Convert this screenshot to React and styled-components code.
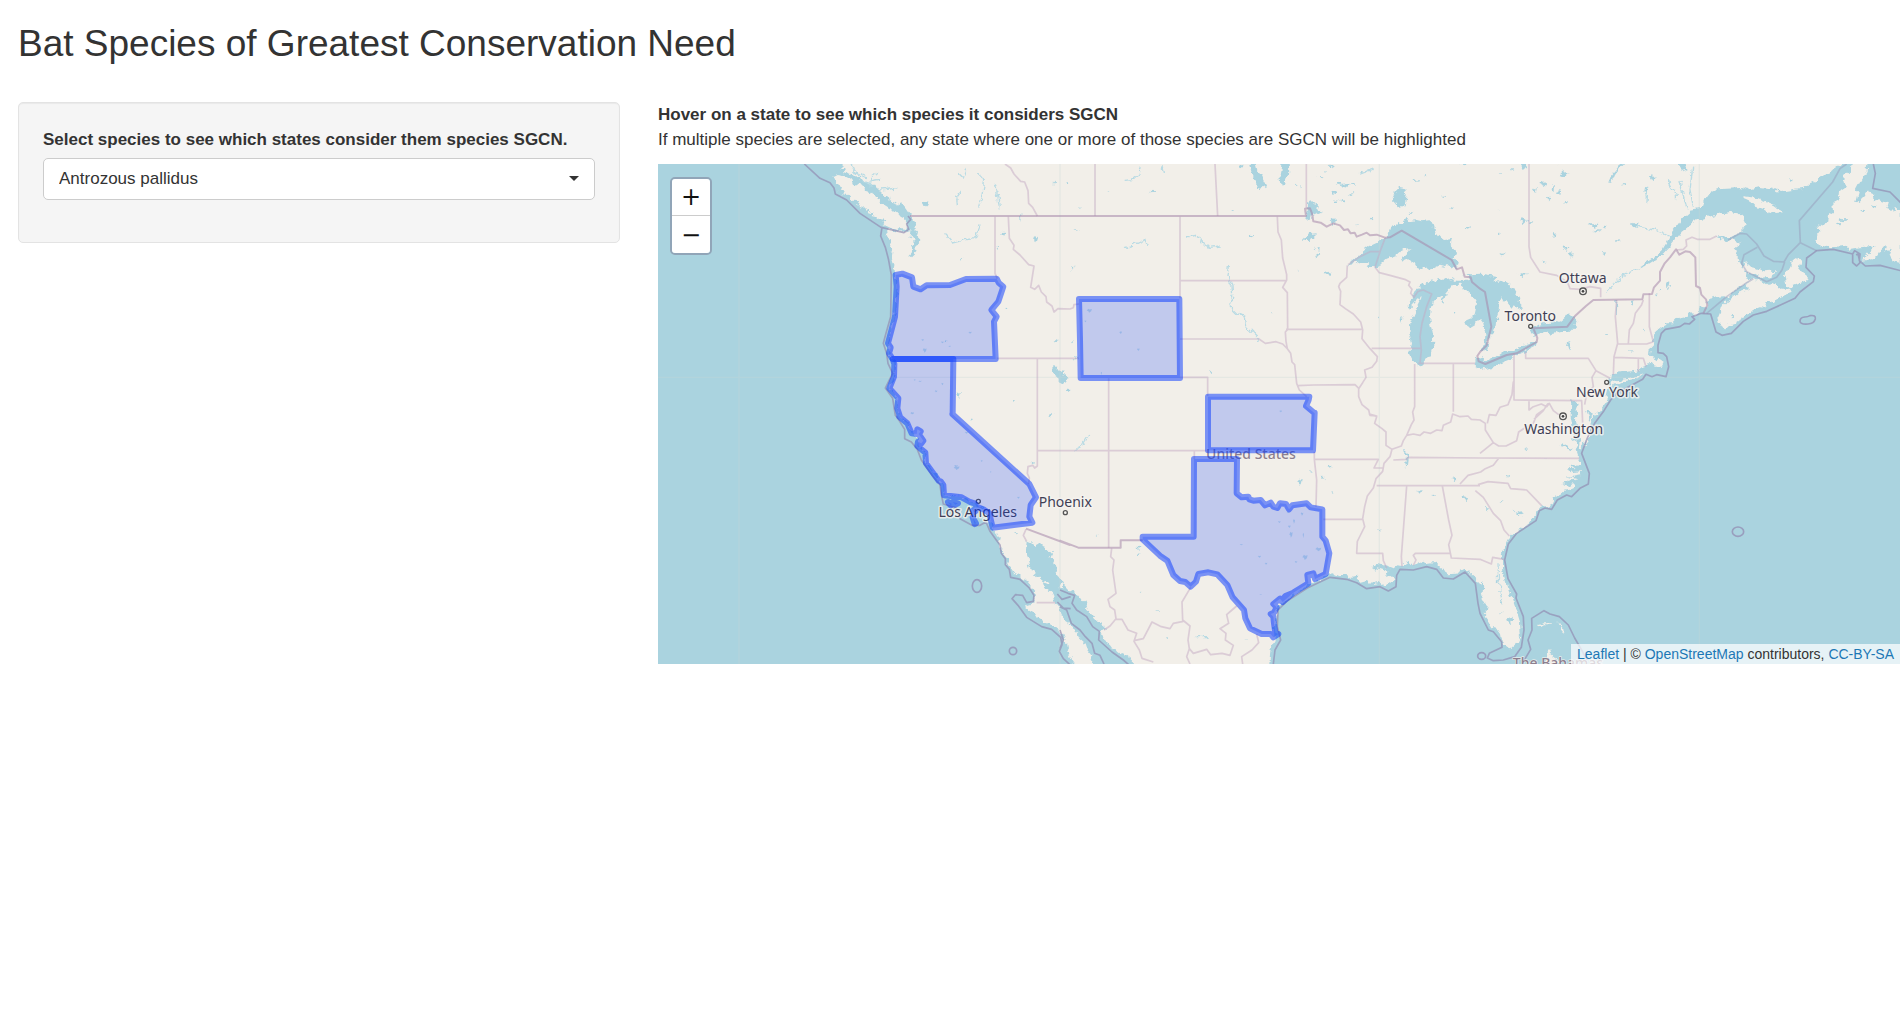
import React, { useState } from "react";
import styled, { createGlobalStyle } from "styled-components";

const GlobalStyle = createGlobalStyle`
  *, *::before, *::after { box-sizing: border-box; }
  body {
    margin: 0;
    background: #fff;
    color: #333;
    font-family: "Liberation Sans", Arial, sans-serif;
    font-size: 17px;
    line-height: 25px;
  }
`;

const Page = styled.main`
  padding: 0 4px 0 18px;
`;

const Title = styled.h1`
  margin: 0;
  padding: 24px 0 38px;
  font-size: 37px;
  font-weight: 400;
  line-height: 40px;
`;

const Columns = styled.div`
  display: grid;
  grid-template-columns: minmax(0, 602fr) minmax(0, 1242fr);
  gap: 38px;
  align-items: start;
`;

const Panel = styled.form`
  padding: 24px 24px 42px;
  background: #f5f5f5;
  border: 1px solid #e3e3e3;
  border-radius: 5px;
  box-shadow: inset 0 1px 1px rgba(0, 0, 0, 0.05);
`;

const Label = styled.label`
  display: block;
  margin-bottom: 6px;
  font-weight: 700;
`;

const SelectBox = styled.div`
  position: relative;
  &::after {
    content: "";
    position: absolute;
    right: 16px;
    top: 18px;
    border: 5px solid transparent;
    border-top-color: #333;
    border-bottom: 0;
    pointer-events: none;
  }
`;

const Select = styled.select`
  display: block;
  appearance: none;
  width: 100%;
  height: 42px;
  padding: 0 32px 2px 15px;
  background: #fff;
  border: 1px solid #ccc;
  border-radius: 5px;
  color: #333;
  font: inherit;
`;

const Intro = styled.p`
  margin: 0 0 12px;
`;

const MapFrame = styled.section`
  position: relative;
  height: 500px;
  overflow: hidden;
  background: #aad3df;
`;

const MapDrawing = styled.svg`
  display: block;
  width: 100%;
  height: 100%;
`;

const ZoomBar = styled.div`
  position: absolute;
  left: 12px;
  top: 13px;
  display: flex;
  flex-direction: column;
  border: 2px solid rgba(120, 120, 145, 0.5);
  border-radius: 5px;
  background-clip: padding-box;
`;

const ZoomButton = styled.button`
  width: 38px;
  height: 37px;
  padding: 0;
  border: 0;
  border-bottom: ${(p) => (p.$first ? "1px solid #ccc" : "0")};
  border-radius: ${(p) => (p.$first ? "3px 3px 0 0" : "0 0 3px 3px")};
  background: #fff;
  color: #111;
  font: 24px/36px "DejaVu Sans", sans-serif;
  cursor: pointer;
`;

const Attribution = styled.div`
  position: absolute;
  right: 0;
  bottom: 0;
  padding: 0 6px;
  background: rgba(255, 255, 255, 0.7);
  font-size: 14px;
  line-height: 20px;
`;

const Link = styled.a`
  color: #1d78b5;
  text-decoration: none;
`;

/* Map sheets: each has its own origin on the full drawing. */
const SHEETS = {
  nw: [-24, -12],
  n: [1206, -12],
  ne: [2466, -12],
  sw: [-24, 738],
  s: [1206, 738],
  se: [2466, 738],
};

const trace = (parts, closed) =>
  "M" +
  parts
    .map(([sheet, pts]) => {
      const [ox, oy] = SHEETS[sheet];
      return pts
        .split(" ")
        .map((pt) => {
          const [x, y] = pt.split(",").map(Number);
          return `${x + ox} ${y + oy}`;
        })
        .join("L");
    })
    .join("L") +
  (closed ? "Z" : "");

const LAND = [
  [
    ["nw", "575,12 574,22 588,26 582,36 600,42 612,38 618,52 632,50 640,64 655,60 662,74 676,74 684,88 700,98 706,112 720,108 722,122 738,126 744,138 756,132 768,148 776,160 790,176 796,190 790,206 804,214 800,228 808,236 806,256 796,262 800,278 786,292 778,286 790,272 784,258 792,244 782,230 784,210 772,214 758,218 740,214 708,202 710,226 722,250 720,262 730,278 728,296 736,310 734,330 738,345 740,400 733,470 722,520 716,550 720,590 732,612 730,650 719,684 742,715 744,760"],
    ["sw", "748,12 772,40 786,68 804,84 806,108 826,128 830,160 866,205 882,225 884,254 935,262 978,280 1006,304 1022,324 1030,356 1040,366 1046,382 1042,396 1056,412 1060,432 1074,444 1072,464 1086,474 1092,492 1110,500 1130,514 1142,530 1156,546 1160,566 1152,580 1136,584 1124,590 1140,604 1156,612 1166,628 1184,638 1204,644 1222,660 1240,668 1246,690 1252,720 1262,744"],
    ["s", "44,762 60,790 120,790 104,762 92,750 94,736 78,716 72,696 56,682 50,664 34,650 28,636 10,624"],
    ["sw", "1230,602 1222,582 1212,570 1208,552 1194,538 1182,528 1176,510 1160,498 1146,482 1140,464 1136,440 1128,420 1130,394 1144,400 1152,408 1168,400 1180,412 1196,418 1206,428 1202,444 1212,464 1216,486 1228,500 1240,520"],
    ["s", "16,526 30,540 48,548 62,566 78,576 84,592 80,606 100,616 112,632 130,640 134,656 122,668 128,686 146,700 156,714 176,728 196,736 212,748 226,762 240,790 620,790 628,762 632,712 644,690 642,650 650,600 690,562 742,530 770,508 800,496 820,490 842,500 860,492 876,504 890,500 902,516 924,510 936,522 960,518 976,530 990,518 1004,508 992,498 978,500 982,486 968,480 936,472 950,462 970,466 990,478 1010,466 1030,468 1046,456 1056,466 1090,452 1104,462 1128,458 1146,476 1166,490 1192,488 1214,476 1232,490 1252,510 1262,530"],
    ["se", "4,560 6,574 20,584 18,600 8,612 20,628 34,652 46,652 60,672 64,694 76,706 96,712 110,700 122,674 120,636 108,596 96,560 86,540 76,510 66,480 66,444 72,420 82,396 94,372 120,360 148,340 160,320 170,306 182,290 204,288 218,280 226,262 252,242 274,238 282,222 262,228 250,222 272,212 292,208 256,198 280,200 304,196 306,184 276,186 264,178 284,176 268,166 304,172 300,150 294,132 304,112 322,92 326,70 332,40 344,10"],
    ["ne", "330,780 318,748 324,744 336,766 348,772 362,748 376,730 384,706 388,684 384,664 392,654 412,648 452,638 488,632 500,622 506,606 516,610 524,620 542,620 548,608 536,600 528,604 522,590 510,584 512,566 522,556 518,544 526,530 524,514 544,498 560,490 580,490 592,478 600,470 616,474 630,460 646,462 662,448 676,440 680,424 690,416 716,410 744,408 756,394 780,384 800,366 818,356 796,370 800,388 776,396 756,414 738,426 722,446 712,470 718,492 730,510 744,498 762,492 778,482 786,468 806,462 830,446 846,440 866,428 890,420 914,406 936,398 930,386 902,386 884,372 860,374 842,362 826,360 808,350 792,344 794,330 784,322 776,310 782,300 768,288 774,276 764,264 776,254 784,244 768,248 756,240 740,246 730,236 706,232 724,228 752,232 764,226 782,222 790,206 800,190 792,174 776,160 752,156 720,160 694,168 664,178 640,188 620,204 604,216 588,236 570,258 548,282 528,298 500,316 470,328 500,306 524,290 548,268 562,244 574,220 596,190 612,168 630,152 662,146 672,120 688,98 712,88 740,86 780,84 800,90 840,80 880,86 900,96 940,90 974,86 990,70 1012,60 1030,44 1050,36 1070,20 1086,12 1086,-30"],
    ["nw", "575,-30"],
  ],
  [["nw", "550,50 566,42 584,48 590,60 606,58 612,72 632,76 642,90 660,96 670,110 684,114 690,130 706,138 720,150 740,156 752,170 764,176 776,192 768,210 750,208 726,204 700,192 708,184 690,180 680,172 664,168 668,158 650,152 640,142 622,138 626,124 608,122 596,108 580,106 584,94 566,92 574,80 560,72"]],
  [["ne", "786,108 804,110 830,114 860,126 884,136 900,148 906,160 888,162 866,158 850,148 828,140 814,126 796,118"]],
  [["ne", "790,298 802,306 806,322 828,324 850,334 872,332 892,334 876,346 874,356 856,352 838,354 828,342 804,338 790,326 796,314"]],
  [["ne", "914,346 922,332 934,310 956,294 964,304 958,324 966,336 986,352 972,364 950,374 930,382 918,372"]],
  [["ne", "1124,-10 1112,30 1090,50 1098,80 1080,92 1078,120 1060,130 1062,154 1044,166 1040,188 1030,200 1010,196 1024,210 1012,226 1006,244 1014,256 1050,262 1090,258 1110,266 1136,262 1170,258 1184,262 1162,282 1146,302 1178,298 1196,280 1206,262 1222,256 1216,272 1232,266 1226,284 1240,304 1262,308 1262,150 1240,140 1246,160 1220,142 1224,126 1200,118 1180,124 1186,106 1162,94 1150,110 1128,130 1136,100 1126,90 1142,60 1160,30 1164,-10"]],
  [["ne", "384,676 410,660 450,656 490,642 470,656 430,664 404,676"]],
  [["se", "168,646 190,640 218,640 206,646 186,646 176,652"]],
  [["se", "232,636 248,648 252,668 244,674 246,654"]],
  [["se", "200,762 202,724 210,714 214,736 230,746 246,756 236,762"]],
  [["sw", "1184,508 1198,520 1196,526 1182,516"]],
  [["sw", "1228,524 1238,518 1240,536 1230,540"]],
];

const WATER = [
  [["n", "862,316 884,300 904,278 930,258 956,246 980,234 990,204 1008,200 1016,188 1028,190 1040,170 1048,184 1070,180 1086,184 1112,180 1122,200 1128,222 1140,236 1154,240 1176,236 1172,256 1188,272 1184,294 1196,308 1190,328 1174,322 1168,308 1150,320 1130,316 1120,322 1096,328 1070,322 1064,310 1044,298 1024,306 1030,290 1054,268 1030,270 1010,286 980,296 966,310 944,322 920,320 930,306 904,306 884,312"]],
  [["n", "1076,616 1060,604 1050,584 1056,550 1048,520 1052,480 1064,452 1078,424 1092,404 1070,420 1046,446 1042,436 1060,410 1070,390 1088,366 1092,378 1110,362 1134,354 1150,360 1172,354 1190,362 1218,362 1230,358 1212,344 1230,346 1260,344"],
   ["ne", "16,346 50,352 40,364 56,368 74,360 90,370 104,392 118,414 116,426 132,442 112,446 98,436 92,446 72,422 66,408 58,424 60,446 52,470 50,500 44,520 26,536 22,566 4,576 0,570 14,556 16,524 10,490 0,476"],
   ["n", "1248,482 1240,492 1226,500 1214,492 1222,478 1240,470 1244,452 1248,430 1240,416 1224,398 1210,384 1196,374 1180,376 1166,392 1156,404 1152,430 1144,412 1130,412 1118,424 1112,446 1108,480 1118,520 1120,552 1110,584 1096,604"]],
  [["ne", "-12,598 6,592 14,602 44,590 66,574 90,576 130,556 156,546 172,544 168,556 146,566 118,580 90,598 60,610 40,624 12,628 -16,614"]],
  [["ne", "148,512 164,498 190,490 216,488 214,478 240,482 258,468 284,466 280,476 292,482 284,500 268,516 240,516 216,522 190,516 164,524 150,518"]],
  [["n", "568,12 586,10 592,34 606,48 618,74 606,90 590,86 588,60 576,42"]],
  [["n", "664,20 668,-8 684,-8 688,36 680,50 676,76 662,76 658,50"]],
  [["n", "996,118 1006,96 1014,84 1036,88 1040,104 1034,136 1016,142 1008,130"]],
  [["n", "732,240 744,222 764,220 762,232 748,240"]],
  [["n", "742,140 750,120 760,130 776,134 772,150 786,156 764,166 750,172 736,176"]],
  [["nw", "1206,616 1218,618 1228,632 1242,634 1240,646 1252,654 1248,668 1232,660 1212,646"]],
  [["n", "-4,640 10,642 22,656 8,670 -4,664"]],
  [["se", "274,-30 272,20 280,60 286,88 268,84 294,104 282,120 296,130 302,96 294,60 288,30 290,0 296,-18"]],
  [["se", "238,102 256,104 282,122 262,116"]],
  [["se", "78,626 90,618 98,630 92,642"]],
  [["ne", "406,418 412,426 410,470 406,458"]],
  [["ne", "396,640 430,636 470,632 500,620 496,640 460,648 410,650 394,662"]],
  [["s", "1028,120 1042,126 1046,150 1042,180 1036,160 1038,136"]],
  [["se", "0,510 10,526 8,552 0,560"]],
  [["ne", "384,70 394,46 408,30 424,10 434,10 412,36 402,48 392,72"]],
  [["ne", "110,-4 140,-4 140,24 128,26"]],
  [["ne", "592,12 620,12 626,28 606,34"]],
];

const STREAMS = [
  [["n", "380,232 400,222 420,236 432,252 452,262 482,258"]],
  [["n", "192,264 220,256 240,246 260,238 264,252"]],
  [["n", "508,318 504,350 516,376 518,410 504,434 530,460 556,472 560,500 598,540"]],
  [["n", "194,58 220,56 240,40 244,22"]],
  [["n", "306,12 310,42"]],
  [["nw", "882,218 906,246 930,240 980,236 990,190"]],
  [["nw", "988,40 1000,66 996,104 986,140"]],
  [["nw", "1036,70 1044,110 1048,148"]],
  [["nw", "922,136 920,110 934,90"]],
  [["nw", "922,36 940,54 952,24"]],
  [["nw", "600,12 622,40 650,54"]],
  [["nw", "640,66 690,58"]],
  [["nw", "690,90 742,84"]],
  [["nw", "660,80 664,56 684,40"]],
  [["ne", "470,326 436,342 410,364 376,400"]],
  [["ne", "464,196 500,204 540,216 566,228"]],
  [["ne", "500,80 498,130"]],
  [["ne", "600,60 608,100 622,148"]],
  [["ne", "560,60 588,100 590,124"]],
  [["ne", "638,20 630,90 640,140"]],
  [["ne", "262,545 268,570"]],
  [["s", "44,120 66,108 86,78"]],
  [["s", "410,680 446,680"]],
  [["se", "100,298 124,316"]],
  [["se", "54,460 56,520 66,575"]],
  [["n", "900,42 944,26"]],
  [["n", "826,66 850,76 884,72"]],
];

/* Small lakes: sheet, then x,y,rx,ry groups. */
const LAKES = [
  ["n", "276,96,9,4 143,96,5,2 63,146,5,4 22,73,3,3 518,152,4,2 544,18,7,8 574,228,11,4 804,342,7,7 770,286,9,5 777,268,6,4 764,270,4,4 716,332,3,2 818,20,9,5 838,70,14,5 856,78,10,8 878,70,7,4 820,100,6,8 850,124,10,4 870,102,10,3 826,122,10,4 780,50,8,2 795,36,3,2 820,184,12,8 888,196,6,3 936,177,9,4 1026,476,4,10 958,474,2,10 1068,60,12,3 1098,50,5,2 1056,156,10,3 1150,110,9,4 1176,142,6,3 1225,206,8,3 1214,14,10,3 640,462,3,2 36,327,5,5 26,695,5,7 36,544,3,3 48,210,8,2 452,637,6,2 1183,458,3,3 48,594,6,5 8,632,6,5 910,36,8,3 720,80,3,5 706,76,4,2"],
  ["nw", "1158,238,6,10 1060,222,6,9 935,295,5,2 1075,443,3,3 1218,541,4,4 927,706,5,9 1091,724,3,6 1201,766,6,3 1212,71,3,3 1252,73,2,4 824,132,8,10 888,544,4,3 1112,170,2,14 1256,696,4,6 1045,262,2,6"],
  ["ne", "252,42,14,8 220,86,5,14 236,100,5,8 130,182,12,7 150,186,10,3 463,194,13,8 342,196,16,7 376,200,8,3 353,210,10,3 258,264,14,5 272,284,6,9 222,228,7,6 518,54,9,6 497,94,4,14 433,72,5,4 164,90,6,8 190,72,9,6 206,114,5,7 258,130,6,4 130,344,14,4 190,306,6,3 68,286,9,3 418,246,9,3 370,280,5,4 566,374,5,12 544,392,6,4 530,406,6,3 458,428,5,4 262,560,7,10 378,524,9,2 758,468,5,4 932,60,6,6 240,12,8,2 64,42,8,3 98,30,6,3 56,148,6,2 60,224,5,3 454,574,4,4 492,510,3,5 1090,180,12,4 1150,150,10,4 1180,140,8,3 1078,192,8,4 900,270,8,4"],
  ["sw", "1200,15,6,3 962,30,3,5 1148,160,3,6 1097,371,5,2"],
  ["s", "720,212,8,10 810,176,8,3 754,186,4,2 816,246,6,2 234,416,8,3 236,430,6,3 240,550,4,2 112,373,5,2 294,601,6,1 320,690,5,3 958,358,4,3 1216,266,5,8 1080,244,8,4 1182,208,8,6 1120,254,8,3 790,206,4,3 560,690,4,3 882,736,5,2 956,470,14,7"],
  ["se", "84,198,3,6 66,275,8,2 140,118,4,2 22,296,7,2 114,308,9,5 196,148,5,2 56,514,3,5 66,576,3,6 70,606,3,4"],
];

const FAINT_LAKES = [
  ["nw", "818,540,4,3 824,571,6,7 877,547,4,3 899,559,4,2 960,518,5,3 810,664,5,2 794,660,3,2 858,694,4,3 877,672,3,4 786,760,5,3"],
  ["n", "88,452,8,6 76,484,3,3 182,518,4,4 235,569,4,4 124,640,2,5 662,754,4,3"],
  ["sw", "787,10,5,3 920,174,9,6 918,168,6,3 949,68,5,3 995,153,3,3 1105,263,4,3 1022,186,2,2"],
  ["s", "544,404,5,2 598,440,5,3 618,461,4,3 735,442,8,8 775,418,9,6 693,374,5,9 658,336,4,3 702,334,3,7 726,312,4,5 688,350,4,4 730,376,2,8 602,553,4,1 684,308,4,2 708,456,4,3"],
];

const STATE_LINES = [
  [["nw", "1035,170 1035,340 1042,356"]],
  [["nw", "1075,170 1078,235 1092,256 1090,268 1110,285 1136,314 1152,318 1142,382 1154,388 1166,376 1174,396 1188,410 1190,426 1206,438 1212,456 1224,446 1260,447"], ["n", "40,443 42,434 57,432"]],
  [["nw", "1065,12 1082,24 1092,42 1112,64 1124,66 1134,92 1136,130 1148,142 1162,168"]],
  [["n", "105,12 105,168"]],
  [["n", "465,12 473,168"]],
  [["n", "739,12 739,145"]],
  [["nw", "1040,595 1260,595"], ["n", "57,595"]],
  [["nw", "1162,597 1162,780"], ["sw", "1162,168 1154,174 1148,166 1134,170 1132,190 1138,204 1136,222"]],
  [["sw", "1162,122 1260,122"], ["s", "444,122"]],
  [["n", "146,655 146,780"], ["s", "146,413"]],
  [["n", "360,652 443,652 443,708"]],
  [["n", "360,170 360,415"]],
  [["n", "360,362 678,362"]],
  [["n", "360,537 597,537 616,550 648,545 668,552 682,566"]],
  [["n", "652,170 654,216 664,240 668,294 680,344 680,360 668,382 682,398 683,508 676,516 678,544 682,566 692,580 696,606 704,614 710,670 718,690 740,710"]],
  [["n", "678,508 905,508"]],
  [["n", "712,677 760,675 885,674 897,686"]],
  [["n", "862,316 860,352 840,370 836,380 842,394 840,434 856,446 880,462 902,486 908,510 906,536 930,566 952,590 950,604 936,622 914,630 918,652 908,668 896,686 896,710 906,734 926,750 930,766 950,768"], ["s", "928,12 950,20 944,40 966,56 978,66 978,106 996,118 990,140 972,160 968,184 948,206 940,234 922,258 914,290 908,326 914,350 900,378 892,394 890,430 968,430 970,452 980,474"]],
  [["n", "935,565 1083,565"]],
  [["n", "945,322 958,338 990,346 1034,358 1050,366 1046,376 1056,388 1052,400 1062,412 1074,394 1090,390 1115,402 1100,440 1086,490 1080,530 1084,570 1080,610"]],
  [["n", "864,314 900,290 930,275 960,275 975,235"]],
  [["n", "960,275 945,322"]],
  [["n", "1064,612 1064,740 1058,756 1062,780"], ["s", "1054,44 1040,76 1030,92 1024,108 996,118"]],
  [["n", "1075,610 1245,610"]],
  [["n", "1180,612 1180,755"]],
  [["s", "1040,76 1060,72 1080,76 1092,66 1112,70 1130,60 1146,62 1150,46 1172,36 1178,12 1200,20 1224,18 1234,28 1262,30"]],
  [["s", "1000,150 1040,148 1044,142 1262,144"], ["se", "298,145"]],
  [["s", "765,148 955,148 942,174 970,174"]],
  [["s", "950,227 1260,227"]],
  [["s", "1200,222 1224,196 1262,186"], ["se", "16,176 40,166 55,146"]],
  [["s", "1040,228 1024,440 1026,470"]],
  [["s", "1147,228 1166,330 1176,376 1166,404 1174,444 1260,448"], ["se", "34,462 38,442 72,448"]],
  [["s", "1060,466 1068,450 1060,436 1066,430 1170,430"]],
  [["s", "790,328 908,328"]],
  [["s", "763,125 763,148 770,210 768,290"]],
  [["s", "403,122 403,147"]],
  [["se", "0,130 40,98 16,60 16,40 0,30"]],
  [["se", "40,98 56,108 78,108 110,92 116,66 134,54 160,40 170,14 190,0"]],
  [["se", "-14,242 10,262 40,310 62,332 72,360 88,378"]],
  [["se", "-6,224 24,215 84,220 92,236 140,240 185,287"]],
  [["ne", "102,580 102,720 305,722 308,790"]],
  [["ne", "100,665 96,704 84,734 60,742 48,766 28,764 22,790"]],
  [["ne", "147,722 147,750 160,740 184,732 200,740 208,730 220,752 236,764"]],
  [["ne", "204,730 190,752 162,778"]],
  [["ne", "137,575 137,595 325,595 348,632 390,655"]],
  [["ne", "348,632 336,652 340,680 320,700 314,734"]],
  [["ne", "410,420 406,470 413,550 402,590 400,645"]],
  [["ne", "413,552 500,552 520,545"]],
  [["ne", "402,592 490,595 498,620"]],
  [["ne", "475,597 475,635"]],
  [["ne", "490,420 484,436 466,460 460,490 448,510 445,550"]],
  [["ne", "508,400 508,500 520,545"]],
  [["ne", "147,12 147,260 152,292 180,336 230,346 262,366 270,386 300,388 330,380 362,385 362,412"]],
  [["ne", "590,270 610,268 620,258 618,240 636,232 652,238 690,238 710,228"]],
  [["s", "155,415 152,440 162,450 158,480 168,550 144,568 150,590 164,600 168,626 150,648 132,660"]],
  [["s", "168,628 186,628 204,660 230,670 222,694 238,720 246,745 280,756"]],
  [["s", "222,692 250,686 276,636 304,650 330,656 340,640 370,634"]],
  [["s", "392,532 366,576 368,630 390,648 384,690 388,716 400,730 440,718 452,734 486,730 510,736 520,706 496,690 498,670 480,656 506,640 500,614 516,600 530,588"]],
  [["s", "388,716 380,740 390,762"]],
  [["s", "590,672 596,698 576,720 545,740 548,762"]],
  [["sw", "1160,578 1216,578"]],
  [["sw", "1128,358 1120,376 1130,394"]],
];

const NATION_LINES = [
  [["nw", "780,168 1254,168"], ["n", "738,168 735,146 750,145 756,160 760,184 782,188 800,200 820,190 840,196 852,210 864,208 872,220 884,218 890,230 906,224 920,218 930,226 950,224 975,233 990,232 1025,212 1175,300 1190,328 1206,322 1214,350 1232,352 1236,366 1260,386"], ["ne", "15,396 34,500 20,556 0,576 -8,588 -4,604 16,612 80,585 110,580 170,546 172,534 160,505 262,500 285,468 318,438 340,420 487,418 490,403 516,402 522,382 540,362 540,336 554,310 570,292 588,268 598,284 616,274 630,276 646,292 648,378 660,384 664,404 678,418 682,436 670,460"]],
  [["sw", "1128,356 1260,405"], ["s", "0,392 55,413 182,413 182,391 248,391"]],
];

const SEA_LINES = [
  [["nw", "463,12 510,55 540,68 552,84 556,102 590,120 630,160 693,202 720,208 762,218 776,208 770,192 782,178 774,168"]],
  [["nw", "696,202 692,228 706,262 715,296 724,345 722,470 708,520 700,550 710,580 714,610 728,640 706,684 728,715 736,766"], ["sw", "740,20 764,58 764,86 784,96 802,118 814,150 848,198 870,225 874,254 880,282 920,294 930,326 966,346 990,346 1008,336 1020,364 1036,386 1050,405 1054,430 1066,446 1066,464 1078,478 1082,502 1110,508 1138,534 1152,556 1150,574 1130,578 1118,556 1096,554 1086,566 1104,586 1130,622 1175,650 1205,658 1232,682 1236,704 1228,724 1240,746 1262,766"]],
  [["s", "640,762 645,720 662,690 652,650 654,600 680,574 742,534 810,502 860,508 890,518 920,536 960,530 985,543 1008,530 1010,496 1020,478 1060,480 1100,470 1130,478 1150,504 1180,507 1215,486 1246,520 1254,580"], ["se", "0,610 25,660 40,665 65,695 66,712 28,730 22,744 40,752 70,750 104,740 124,712 132,660 130,620 108,564 110,552 84,506 74,450 85,402 110,370 168,332 178,302 195,294 215,298 232,270 260,255 275,260 300,235 325,222 328,190 305,130 322,84 344,40 372,2"], ["ne", "392,720 410,700 488,658 498,643 516,650 530,644 558,650 566,620 560,590 550,580 534,578 534,556 544,520 556,508 600,500 614,490 628,492 644,478 636,470 664,460 692,462 708,516 726,526 754,520 790,484 820,465 860,454 945,415 960,396 1000,365 1003,348 978,322 980,294 1010,272 1060,268 1118,282 1124,272 1140,282 1138,302 1156,318 1200,316 1262,332"]],
  [["ne", "1180,12 1186,40 1178,85 1230,96 1262,128"]],
  [["ne", "1128,284 1134,282 1140,308 1130,318 1118,308 1118,284"]],
  [["se", "132,752 152,718 144,690 156,660 155,625 192,602 210,612 238,620 265,645 284,684 306,722 320,750"]],
  [["s", "0,540 24,550 44,556 36,580 50,600 80,620 98,650 118,664 116,690 156,726 190,750 206,764"]],
  [["s", "0,590 20,600 34,640 60,660 76,680 96,700 104,730 120,736 132,762"]],
  [["s", "0,660 10,690 0,716"]],
  [["sw", "1222,552 1236,568 1262,560"]],
  [["sw", "1222,576 1240,594 1262,596"]],
];

const GULF_LINES = [
  [["ne", "1100,12 1080,26 1058,66 958,182 961,248 1010,272"]],
  [["ne", "961,248 925,284 912,306 880,304 852,288 830,252 800,222 780,220 745,240"]],
  [["ne", "832,262 792,284 785,310 800,335 860,365 890,352 906,330 914,306"]],
  [["ne", "680,460 740,410 800,368 820,356"]],
];

const ISLETS = [
  ["sw", 981, 528, 14, 19],
  ["sw", 1089, 723, 11, 11],
  ["se", 774, 365, 17, 14],
  ["se", 5, 738, 12, 10],
];

const SPECIES_RANGE = {
  Oregon: [
    [["nw", "737,345 757,341 786,352 790,380 812,388 830,376 900,375 948,357 1040,356 1046,368 1060,380 1045,425 1024,450 1040,470 1032,485 1037,597 728,597 717,580 722,562 714,550 735,470 740,380"]],
  ],
  California: [
    [["nw", "728,597 910,597 908,762"], ["sw", "907,12 1138,222 1158,262 1142,285 1138,320 1147,338 1028,353 1018,310 1000,298 980,290 974,280 960,276 935,262 882,256 880,225 872,214 866,212 828,160 826,128 802,108 804,95 814,100 820,92 806,72 812,64 802,58 800,72 785,70 772,40 748,20"], ["nw", "750,770 742,745 745,715 718,685 732,650 733,612"]],
    [["sw", "894,276 906,282 902,286 898,282"]],
    [["sw", "908,276 924,280 916,284"]],
    [["sw", "968,322 978,340 974,342"]],
    [["sw", "970,300 976,304 972,306"]],
  ],
  Wyoming: [[["n", "57,417 358,417 360,654 62,654 60,540"]]],
  Kansas: [[["n", "444,710 748,710 746,720 738,738 764,760"], ["s", "764,8 759,121 444,121"]]],
  Texas: [
    [["s", "402,147 531,147 530,250 545,262 565,260 568,268 580,272 602,270 615,286 632,278 640,290 652,294 660,280 678,282 687,298 697,286 740,280 752,292 787,298 787,380 797,392 808,430 797,492 765,507 760,490 742,495 745,520 700,548 668,576 660,566 640,582 650,592 642,608 632,612 640,620 642,640 646,668 655,672 640,682 632,672 605,672 570,655 556,625 552,600 518,562 502,525 472,493 445,487 415,492 408,515 392,530 376,516 360,513 340,495 322,452 300,437 248,388 248,380 401,380"]],
    [["s", "664,574 676,558 700,548"]],
  ],
};

const CITIES = [
  { name: "Ottawa", x: 2774, y: 358, dot: [2775, 382], capital: true },
  { name: "Toronto", x: 2617, y: 472, dot: [2618, 487] },
  { name: "New York", x: 2847, y: 700, dot: [2846, 655] },
  { name: "Washington", x: 2717, y: 810, dot: [2715, 757], capital: true },
  { name: "Los Angeles", x: 959, y: 1060, dot: [961, 1012] },
  { name: "Phoenix", x: 1222, y: 1029, dot: [1222, 1046] },
];

const Terrain = styled.path`
  fill: ${(p) => p.$fill};
`;

const Boundary = styled.path`
  fill: none;
  stroke: ${(p) => p.$color};
  stroke-width: ${(p) => p.$weight};
  stroke-linejoin: round;
`;

const Range = styled.path`
  fill: #03f;
  fill-opacity: 0.2;
  stroke: #03f;
  stroke-opacity: 0.5;
  stroke-width: 18;
  stroke-linejoin: round;
  stroke-linecap: round;
`;

const PlaceName = styled.text`
  font-family: "Noto Sans", sans-serif;
  font-size: 42px;
  font-weight: ${(p) => (p.$region ? 500 : 400)};
  text-anchor: middle;
  fill: ${(p) => (p.$region ? "#8d7f8f" : "#3f3f55")};
  stroke: #f6f4f0;
  stroke-width: ${(p) => (p.$region ? 4 : 9)};
  stroke-opacity: 0.8;
  stroke-linejoin: round;
  paint-order: stroke;
`;

const Dot = styled.circle`
  fill: ${(p) => (p.$solid ? "#444" : "#f8f6f2")};
  stroke: #555;
  stroke-width: ${(p) => (p.$solid ? 0 : 4)};
`;

function Lakes({ groups, fill }) {
  return groups.flatMap(([sheet, data]) =>
    data.split(" ").map((item) => {
      const [x, y, rx, ry] = item.split(",").map(Number);
      const cx = x + SHEETS[sheet][0];
      const cy = y + SHEETS[sheet][1];
      const d = `M${cx - rx} ${cy}l${rx * 0.6} ${-ry}l${rx * 0.5} ${ry * 0.4}l${rx * 0.9} ${-ry * 0.2}l${-rx * 0.3} ${ry * 1.1}l${-rx * 0.8} ${ry * 0.7}l${-rx * 0.3} ${-ry * 0.8}Z`;
      return <Terrain key={sheet + item} d={d} $fill={fill} />;
    })
  );
}

function RangeMap() {
  const all = (list, closed) => list.map((s) => trace(s, closed)).join("");
  return (
    <MapDrawing
      viewBox="0 0 3726 1500"
      preserveAspectRatio="xMidYMid slice"
      role="img"
      aria-label="Map of the United States with highlighted states"
    >
      <defs>
        <filter id="ragged" x="0" y="0" width="3726" height="1500" filterUnits="userSpaceOnUse" colorInterpolationFilters="sRGB">
          <feTurbulence type="fractalNoise" baseFrequency="0.05" numOctaves="3" seed="4" />
          <feDisplacementMap in="SourceGraphic" scale="22" xChannelSelector="R" yChannelSelector="G" />
        </filter>
      </defs>
      <g filter="url(#ragged)">
        <rect x="-40" y="-40" width="3806" height="1580" fill="#aad3df" />
        <Terrain d={all(LAND, true)} $fill="#f2efe9" />
        <Terrain d={all(WATER, true)} $fill="#aad3df" />
        <Boundary d={all(STREAMS)} $color="#b9dbe4" $weight={4} />
        <Lakes groups={LAKES} fill="#aad3df" />
      </g>
      <Lakes groups={FAINT_LAKES} fill="#bfd9e2" />
      <Boundary d="M243 0V1500M1206 0V1500M2164 0V1500M3124 0V1500M0 640H3726" $color="rgba(200,215,215,.3)" $weight={4} />
      <Boundary d={all(STATE_LINES)} $color="rgba(195,170,195,.5)" $weight={5} />
      <Boundary d={all(GULF_LINES)} $color="rgba(150,150,185,.45)" $weight={5} />
      <Boundary d={all(NATION_LINES)} $color="rgba(165,135,170,.55)" $weight={6} />
      <Boundary d={all(SEA_LINES)} $color="rgba(145,135,175,.65)" $weight={5} />
      {ISLETS.map(([sheet, x, y, rx, ry]) => (
        <ellipse
          key={sheet + x}
          cx={x + SHEETS[sheet][0]}
          cy={y + SHEETS[sheet][1]}
          rx={rx}
          ry={ry}
          fill="none"
          stroke="rgba(145,135,175,.7)"
          strokeWidth="5"
        />
      ))}
      <Boundary d="M3426 472q0-12 14-13q10 0 16-4q18-3 16 10q-4 14-22 15q-22 2-24-8Z" $color="rgba(145,135,175,.7)" $weight={5} />
      <PlaceName $region x="1779" y="884">United States</PlaceName>
      <PlaceName $region x="2700" y="1512">The Bahamas</PlaceName>
      {CITIES.map((c) => (
        <g key={c.name}>
          <Dot cx={c.dot[0]} cy={c.dot[1]} r={c.capital ? 10 : 6} />
          {c.capital && <Dot $solid cx={c.dot[0]} cy={c.dot[1]} r={4} />}
          <PlaceName x={c.x} y={c.y}>{c.name}</PlaceName>
        </g>
      ))}
      {Object.entries(SPECIES_RANGE).map(([state, shape]) => (
        <Range key={state} d={all(shape, true)} />
      ))}
    </MapDrawing>
  );
}

const SPECIES = [
  "Antrozous pallidus",
  "Corynorhinus townsendii",
  "Eptesicus fuscus",
  "Lasiurus cinereus",
  "Myotis lucifugus",
];

export default function App() {
  const [species, setSpecies] = useState(SPECIES[0]);
  return (
    <>
      <GlobalStyle />
      <Page>
        <Title>Bat Species of Greatest Conservation Need</Title>
        <Columns>
          <Panel>
            <Label htmlFor="species">Select species to see which states consider them species SGCN.</Label>
            <SelectBox>
              <Select id="species" value={species} onChange={(e) => setSpecies(e.target.value)}>
                {SPECIES.map((s) => (
                  <option key={s}>{s}</option>
                ))}
              </Select>
            </SelectBox>
          </Panel>
          <div>
            <Intro>
              <strong>Hover on a state to see which species it considers SGCN</strong>
              <br />
              If multiple species are selected, any state where one or more of those species are SGCN will be highlighted
            </Intro>
            <MapFrame>
              <RangeMap />
              <ZoomBar>
                <ZoomButton type="button" $first aria-label="Zoom in">+</ZoomButton>
                <ZoomButton type="button" aria-label="Zoom out">−</ZoomButton>
              </ZoomBar>
              <Attribution>
                <Link href="#leaflet">Leaflet</Link> | © <Link href="#osm">OpenStreetMap</Link> contributors,{" "}
                <Link href="#license">CC-BY-SA</Link>
              </Attribution>
            </MapFrame>
          </div>
        </Columns>
      </Page>
    </>
  );
}
